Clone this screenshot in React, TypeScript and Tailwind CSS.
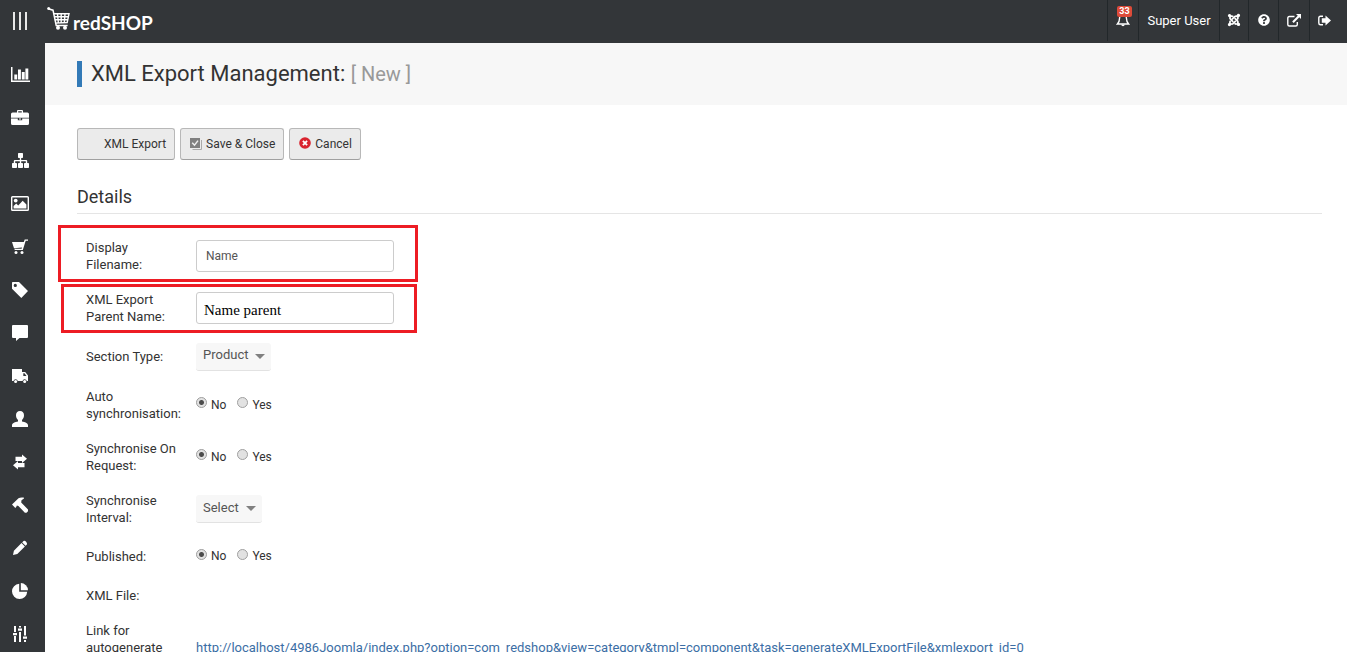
import React from "react";
import { FaQuestionCircle, FaJoomla } from "react-icons/fa";

type IconProps = { className?: string };

const Svg = ({
  className = "size-4",
  children,
  box = "0 0 16 16",
}: IconProps & { children: React.ReactNode; box?: string }) => (
  <svg viewBox={box} className={className} fill="currentColor" aria-hidden="true">
    {children}
  </svg>
);

const ChartIcon = () => (
  <Svg className="h-[15px] w-[19px]" box="0 0 19 15">
    <path d="M0 0h1.500v13.400H19V15H0zM3.300 7.500h2.900v4.900H3.300zM7 2.600h2.900v9.800H7zM10.800 5h2.900v7.400h-2.900zM14.400 1.500h2.900v10.900h-2.900z" />
  </Svg>
);
const BriefcaseIcon = () => (
  <Svg className="h-[15px] w-[18px]" box="0 0 18 15">
    <path
      fillRule="evenodd"
      d="M6 2.500V1q0-1 1-1h4q1 0 1 1v1.500h4.400Q18 2.500 18 4v3.800H0V4q0-1.500 1.600-1.500zM7.200 1.200v1.300h3.600V1.200z"
    />
    <path d="M0 8.500h6.800v1.700h4.400V8.500H18v4.900q0 1.600-1.600 1.600H1.600Q0 15 0 13.400zM8 8.500h2v.9H8z" />
  </Svg>
);
const SitemapIcon = () => (
  <Svg className="h-[15px] w-[17px]" box="0 0 17 15">
    <path d="M6.700 0h3.600q.7 0 .7.700v3.600q0 .7-.7.700H9.200v1.900h5q1 0 1 1V10h1q.8 0 .8.800v3.400q0 .8-.8.800h-3.400q-.8 0-.8-.8v-3.400q0-.8.8-.8h1V8.200H9.200V10h1q.8 0 .8.800v3.400q0 .8-.8.800H6.800q-.8 0-.8-.8v-3.400q0-.8.8-.8h1V8.200H3.200V10h1q.8 0 .8.800v3.400q0 .8-.8.800H.8q-.8 0-.8-.8v-3.400Q0 10 .8 10h1V7.900q0-1 1-1h5V5H6.700Q6 5 6 4.300V.7q0-.7.700-.7z" />
  </Svg>
);
const ImageIcon = () => (
  <Svg className="h-[15px] w-[18px]" box="0 0 18 15">
    <path
      fillRule="evenodd"
      d="M1.500 0h15A1.500 1.500 0 0 1 18 1.500v12a1.500 1.500 0 0 1-1.500 1.500h-15A1.500 1.500 0 0 1 0 13.500v-12A1.500 1.500 0 0 1 1.500 0zM1.400 1.400v12.200h15.200V1.400z"
    />
    <circle cx="4.700" cy="4.600" r="1.900" />
    <path d="M2.600 12.500V10l2.600-2.600 2 2L11.700 4.700l3.700 3.800v4z" />
  </Svg>
);
const CartIcon = () => (
  <Svg>
    <path d="M0 3h11.800l.9-2.500H16v1.300h-2.300L10.800 11H2.600v-1.300h7L10 8.600 2 9.200z" />
    <circle cx="4" cy="13.500" r="1.500" />
    <circle cx="10" cy="13.500" r="1.500" />
  </Svg>
);
const TagIcon = () => (
  <Svg>
    <path
      fillRule="evenodd"
      d="M0 .8Q0 0 .8 0H7l9 9-6.700 7L0 6.800zM3.300 1.800a1.600 1.600 0 1 0 0 3.200 1.600 1.600 0 0 0 0-3.200z"
    />
  </Svg>
);
const CommentIcon = () => (
  <Svg>
    <path d="M1 0h14q1 0 1 1v11q0 1-1 1H7.500L4 16v-3H1q-1 0-1-1V1q0-1 1-1z" />
  </Svg>
);
const TruckIcon = () => (
  <Svg>
    <path
      fillRule="evenodd"
      d="M0 1h10v3h3.200L16 7.500V13h-1.200a2.200 2.200 0 0 0-4.300 0H5.800a2.200 2.200 0 0 0-4.300 0H0zM11.300 5.300V8h3.200l-2-2.700z"
    />
    <circle cx="3.600" cy="13.400" r="1.500" />
    <circle cx="12.700" cy="13.400" r="1.500" />
  </Svg>
);
const UserIcon = () => (
  <Svg>
    <path d="M8 0c2.600 0 4 1.700 4 4.300 0 2-.8 3.700-2 4.600v1.500c2.800.4 6 1.500 6 3.700V16H0v-1.900c0-2.200 3.200-3.300 6-3.700V8.900c-1.200-.9-2-2.600-2-4.600C4 1.700 5.400 0 8 0z" />
  </Svg>
);
const TransferIcon = () => (
  <Svg>
    <path d="M3.500 2.700H10V.5l5 4.300-5 4.200V7H3.500zM12.500 9H6V7L1 11.200 6 15.500v-2.300h6.500z" />
  </Svg>
);
const HammerIcon = () => (
  <Svg>
    <path d="M0 7.600 6.500 1.200Q8.500 0 11.700.6L12 1.400 9.500 3.300l-.3 2.200L16 12.400v1.800L14.500 15.800h-1.600L6.400 8.900l-1.500-.3-.7 1.400L3.300 11z" />
  </Svg>
);
const PencilIcon = () => (
  <Svg>
    <path d="m1 15 .9-4.300 7.600-7.600 3.400 3.400-7.600 7.600zM10.200 2.400l1.300-1.300Q12.700.2 14.100 1.700t.8 2.800L13.600 5.800z" />
  </Svg>
);
const PieIcon = () => (
  <Svg>
    <path d="M7.200.8v8h8A7.600 7.600 0 1 1 7.200.8z" />
    <path d="M8.800 0A7.400 7.400 0 0 1 16 7.200H8.800z" />
  </Svg>
);
const SlidersIcon = () => (
  <Svg>
    <path d="M2 0h2v6H2zM2 10h2v6H2zM1 7h4v2.200H1zM7 0h2v1.600H7zM7 6h2v10H7zM6 2.600h4v2.200H6zM12 0h2v9.500h-2zM12 14h2v2h-2zM11 10.600h4v2.200h-4z" />
  </Svg>
);

const CartLogo = () => (
  <svg viewBox="0 0 24 24" className="h-6 w-6" fill="none" stroke="currentColor" aria-hidden="true">
    <circle cx="1.700" cy="1.500" r="1.500" fill="currentColor" stroke="none" />
    <path d="M2 2l4 1.200 3.200 15.200h11.400" strokeWidth="1.500" />
    <path d="M6.500 6.800H22l-1.800 8.700-11.600.6M7 9.700h14.500M7.800 12.800h13M10.500 7l.9 9M14.200 7v9M18 7l-.7 9" strokeWidth="1.400" />
    <circle cx="11" cy="20.800" r="2" fill="currentColor" stroke="none" />
    <circle cx="18" cy="20.800" r="2" fill="currentColor" stroke="none" />
  </svg>
);

const BellIcon = () => (
  <svg viewBox="0 0 14 14" className="size-[14px]" fill="none" stroke="currentColor" aria-hidden="true">
    <path d="M7 .8C4.500 1 3.600 3 3.600 5c0 3-.8 4.500-2.200 6h11.200c-1.400-1.500-2.200-3-2.200-6 0-2-.9-4-3.400-4.200z" strokeWidth="1.400" />
    <path d="M5.300 11.500a1.700 1.700 0 0 0 3.400 0z" fill="currentColor" stroke="none" />
  </svg>
);
const ExternalIcon = () => (
  <svg viewBox="0 0 14 13" className="h-[13px] w-[14px]" fill="none" stroke="currentColor" aria-hidden="true">
    <path d="M7.500 2.500H2.300Q.8 2.500.8 4v6.500q0 1.500 1.500 1.500h6.500q1.500 0 1.500-1.500V8" strokeWidth="1.400" />
    <path d="M9 0h5v5l-1.700-1.700-5.600 5.600-1.500-1.500 5.600-5.600z" fill="currentColor" stroke="none" />
  </svg>
);
const SignOutIcon = () => (
  <svg viewBox="0 0 13 11" className="h-[11px] w-[13px]" aria-hidden="true">
    <path d="M5 1.200H2.500Q.8 1.200.8 3v5q0 1.800 1.700 1.800H5" fill="none" stroke="currentColor" strokeWidth="1.400" />
    <path d="M7.500.5 13 5.500l-5.500 5V7.800H3.800V3.200h3.700z" fill="currentColor" />
  </svg>
);
const SaveIcon = () => (
  <svg viewBox="0 0 12 13" className="h-[13px] w-3" aria-hidden="true">
    <path d="M11.500 2v9.500H2.500" fill="none" stroke="#aaa" />
    <path d="M0 0h10v10H0z" fill="#808080" />
    <path d="m2.200 4.800 2.300 2.400L8 2.600" fill="none" stroke="#eee" strokeWidth="1.500" />
  </svg>
);
const CancelIcon = () => (
  <svg viewBox="0 0 12 14" className="h-[14px] w-3" aria-hidden="true">
    <circle cx="6" cy="6" r="5.800" fill="#d9232e" />
    <path d="m3.900 3.900 4.200 4.200m0-4.200L3.900 8.100" stroke="#fff" strokeWidth="1.800" />
  </svg>
);

const menu: [string, React.ReactNode][] = [
  ["Statistics", <ChartIcon />],
  ["Orders", <BriefcaseIcon />],
  ["Categories", <SitemapIcon />],
  ["Media", <ImageIcon />],
  ["Products", <CartIcon />],
  ["Discounts", <TagIcon />],
  ["Communication", <CommentIcon />],
  ["Shipping", <TruckIcon />],
  ["Users", <UserIcon />],
  ["Import / Export", <TransferIcon />],
  ["Tools", <HammerIcon />],
  ["Customization", <PencilIcon />],
  ["Reports", <PieIcon />],
  ["Configuration", <SlidersIcon />],
];

const navCell = "flex h-[41px] items-center justify-center border-l border-[#22272a] pb-px";

function Header() {
  return (
    <header className="flex h-[43px] shrink-0 bg-[#333639] text-white">
      <button aria-label="Toggle menu" className="flex w-[45px] items-center gap-[4px] pb-[2px] pl-[13px]">
        <span className="h-[18px] w-[2px] bg-[#e8e8e8]" />
        <span className="h-[18px] w-[2px] bg-[#e8e8e8]" />
        <span className="h-[18px] w-[2px] bg-[#e8e8e8]" />
      </button>
      <a href="#home" className="flex items-start gap-[2px] pt-[7px] pl-[2px]">
        <CartLogo />
        <span className="pt-[3px] font-[Lato,sans-serif] text-[19px] leading-[26px] font-bold">
          redSHOP
        </span>
      </a>
      <nav className="ml-auto flex text-[13px]">
        <a href="#notifications" aria-label="Notifications" className={`${navCell} relative w-[31px]`}>
          <BellIcon />
          <span className="absolute top-[6px] left-[9px] flex h-[11px] w-[15px] items-center justify-center rounded-[2px] bg-[#dd4b39] text-[9px] leading-none font-bold">
            33
          </span>
        </a>
        <a href="#user" className={`${navCell} w-[81px]`}>Super User</a>
        <a href="#joomla" aria-label="Joomla" className={`${navCell} w-[29px]`}><FaJoomla className="size-[14px]" /></a>
        <a href="#help" aria-label="Help" className={`${navCell} w-[30px]`}><FaQuestionCircle className="size-3" /></a>
        <a href="#site" aria-label="View site" className={`${navCell} w-[31px]`}><ExternalIcon /></a>
        <a href="#logout" aria-label="Log out" className={`${navCell} w-[38px] pr-[8px]`}><SignOutIcon /></a>
      </nav>
    </header>
  );
}

function Row({
  label,
  htmlFor,
  height,
  children,
  align = "align-middle",
}: {
  label: string;
  htmlFor?: string;
  height: string;
  children?: React.ReactNode;
  align?: string;
}) {
  return (
    <tr className={height}>
      <th scope="row" className="w-[119px] py-[9px] pr-[14px] pl-[9px] text-left align-middle font-normal">
        <label htmlFor={htmlFor} className="block">{label}</label>
      </th>
      <td className={align}>{children}</td>
    </tr>
  );
}

function YesNo({ name }: { name: string }) {
  const radio =
    "mb-[5px] size-[11px] appearance-none rounded-full border border-[#a0a0a0] bg-[#e2e2e2] checked:bg-[radial-gradient(circle,#4c4c4c_0_2px,#e2e2e2_3px)]";
  return (
    <div className="flex items-center gap-[11px] text-[12px]">
      {["No", "Yes"].map((v) => (
        <label key={v} className="flex items-center gap-[4px]">
          <input type="radio" name={name} defaultChecked={v === "No"} className={radio} />
          {v}
        </label>
      ))}
    </div>
  );
}

function Dropdown({ id, value, width }: { id: string; value: string; width: string }) {
  return (
    <div className={`relative h-[28px] ${width}`}>
      <select
        id={id}
        className="block h-full w-full appearance-none rounded-[3px] border-b border-[#e2e2e2] bg-[#f7f7f7] pb-[3px] pl-[7px] text-[13px] text-[#555]"
      >
        <option>{value}</option>
      </select>
      <svg viewBox="0 0 10 5" className="pointer-events-none absolute top-[11px] right-[6px] h-[5px] w-[10px]" aria-hidden="true">
        <path d="M0 0h10L5 5z" fill="#808080" />
      </svg>
    </div>
  );
}

const toolButton =
  "flex h-8 items-center rounded-[3px] border border-[#b8b8b8] border-b-[#a0a0a0] bg-[#ebebeb] pr-[8px] text-[12px]";
const field = "block h-8 w-[198px] rounded-[3px] border border-[#ccc] bg-white";

export default function App() {
  return (
    <div className="flex h-screen flex-col overflow-hidden bg-white font-[Roboto,sans-serif] text-[13px] leading-[17px] text-[#333]">
      <Header />
      <div className="flex min-h-0 flex-1">
        <aside className="w-[45px] shrink-0 overflow-hidden bg-[#333639] pt-[10px] text-white">
          {menu.map(([name, icon]) => (
            <a key={name} href="#menu" aria-label={name} className="flex h-[43px] items-center justify-center pr-[5px]">
              {icon}
            </a>
          ))}
        </aside>
        <main className="min-w-0 flex-1 overflow-hidden">
          <div className="flex h-[62px] items-center bg-[#f7f7f7] pl-8">
            <h1 className="border-l-[5px] border-[#337ab7] pl-[9px] text-[22px] leading-[26px]">
              XML Export Management: <small className="text-[20px] text-[#999]">[ New ]</small>
            </h1>
          </div>
          <div className="pt-[23px] pr-[25px] pl-8">
            <div className="flex gap-[5px]">
              <button className={`${toolButton} pl-[26px]`}>XML Export</button>
              <button className={`${toolButton} gap-[4px] pl-[9px]`}><SaveIcon />Save &amp; Close</button>
              <button className={`${toolButton} gap-[4px] pl-[9px]`}><CancelIcon />Cancel</button>
            </div>
            <h2 className="mt-6 border-b border-[#e5e5e5] pb-[4px] text-[18px] leading-[25px]">Details</h2>
            <form className="relative pt-4">
              <table className="w-full border-collapse">
                <tbody>
                  <Row label="Display Filename:" htmlFor="filename" height="h-[52px]">
                    <input id="filename" defaultValue="Name" className={`${field} px-[9px] text-[12px] text-[#555]`} />
                  </Row>
                  <Row label="XML Export Parent Name:" htmlFor="parent" height="h-[52px]">
                    <input
                      id="parent"
                      defaultValue="Name parent"
                      className={`${field} px-[7px] pt-[4px] font-['Liberation_Serif',serif] text-[15px] text-black`}
                    />
                  </Row>
                  <Row label="Section Type:" htmlFor="section" height="h-[45px]">
                    <Dropdown id="section" value="Product" width="w-[75px]" />
                  </Row>
                  <Row label="Auto synchronisation:" height="h-[52px]"><YesNo name="auto" /></Row>
                  <Row label="Synchronise On Request:" height="h-[52px]"><YesNo name="request" /></Row>
                  <Row label="Synchronise Interval:" htmlFor="interval" height="h-[52px]">
                    <Dropdown id="interval" value="Select" width="w-[66px]" />
                  </Row>
                  <Row label="Published:" height="h-[43px]"><YesNo name="published" /></Row>
                  <Row label="XML File:" height="h-[35px]" />
                  <Row label="Link for autogenerate" height="h-[52px]" align="pb-[9px] align-bottom">
                    <a href="#generate" className="text-[#3b6ea5]">
                      http://localhost/4986Joomla/index.php?option=com_redshop&amp;view=category&amp;tmpl=component&amp;task=generateXMLExportFile&amp;xmlexport_id=0
                    </a>
                  </Row>
                </tbody>
              </table>
              <div className="pointer-events-none absolute top-[11px] -left-[19px] h-[57px] w-[360px] border-3 border-[#ed1c24]" />
              <div className="pointer-events-none absolute top-[70px] -left-[16px] h-[49px] w-[356px] border-3 border-[#ed1c24]" />
            </form>
          </div>
        </main>
      </div>
    </div>
  );
}
